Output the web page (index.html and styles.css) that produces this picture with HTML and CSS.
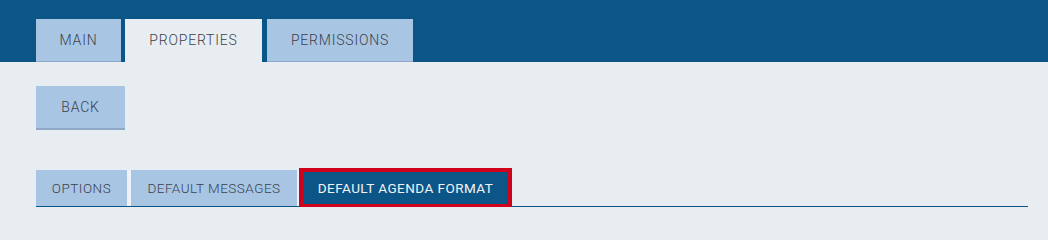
FILE: index.html
```html
<!DOCTYPE html>
<html>
<head>
<meta charset="utf-8">
<link rel="stylesheet" href="styles.css">
</head>
<body>
<header class="topbar">
  <nav class="maintabs">
    <a class="maintab tab-main">MAIN</a>
    <a class="maintab tab-props active">PROPERTIES</a>
    <a class="maintab tab-perms">PERMISSIONS</a>
  </nav>
</header>
<main class="content">
  <div class="actions">
    <button class="back">BACK</button>
  </div>
  <nav class="subtabs">
    <a class="subtab tab-options">OPTIONS</a>
    <a class="subtab tab-messages">DEFAULT MESSAGES</a>
    <a class="subtab tab-agenda active">DEFAULT AGENDA FORMAT</a>
  </nav>
</main>
</body>
</html>
```
FILE: styles.css
```css
html, body {
  margin: 0;
  padding: 0;
  background: #e8edf2;
  font-family: Roboto, "Liberation Sans", sans-serif;
  color: #3c414b;
}
.topbar {
  background: #0c5587;
  height: 62px;
  padding: 19px 0 0 36px;
  box-sizing: border-box;
}
.maintabs {
  display: flex;
  height: 43px;
}
.maintab {
  display: flex;
  align-items: center;
  justify-content: center;
  background: #a8c6e4;
  border-bottom: 1px solid #8fa8c5;
  font-size: 14px;
  font-weight: 300;
  letter-spacing: 0.8px;
  box-sizing: border-box;
}
.tab-main { width: 85px; margin-right: 4px; }
.tab-props { width: 137px; margin-right: 5px; }
.tab-perms { width: 146px; }
.maintab.active {
  background: #e8edf2;
  border-bottom-color: #e8edf2;
}
.content {
  padding: 24px 20px 0 36px;
}
.actions {
  display: flex;
}
.back {
  height: 44px;
  width: 89px;
  background: #a8c6e4;
  border: none;
  border-bottom: 2px solid #8fa8c5;
  font-family: inherit;
  font-size: 14px;
  font-weight: 300;
  letter-spacing: 0.8px;
  color: #3c414b;
  padding: 0;
}
.subtabs {
  margin-top: 40px;
  display: flex;
  border-bottom: 1px solid #0c5587;
  height: 36px;
}
.subtab {
  display: flex;
  align-items: center;
  justify-content: center;
  background: #a8c6e4;
  font-size: 13.5px;
  font-weight: 300;
  letter-spacing: 0.5px;
  box-sizing: border-box;
  height: 36px;
}
.tab-options { width: 95px; border-right: 4px solid #eef2f6; }
.tab-messages { width: 170px; border-right: 4px solid #eef2f6; }
.tab-agenda { width: 209px; }
.subtab.active {
  background: #0c5587;
  color: #f2f4f6;
  border: 2px solid #d0021b;
  outline: 2px solid #d0021b;
  font-weight: 400;
  letter-spacing: 0.45px;
}
```
